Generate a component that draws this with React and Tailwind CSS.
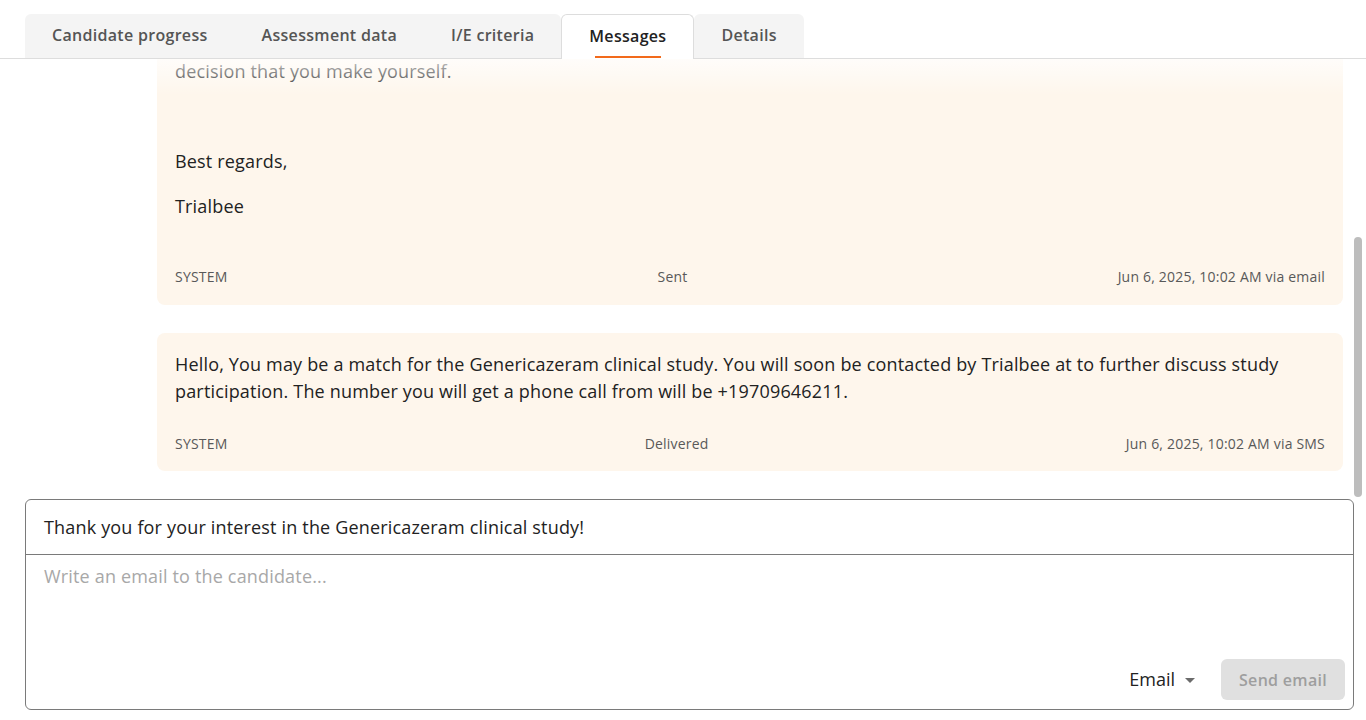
import React from "react";

const TABS = ["Candidate progress", "Assessment data", "I/E criteria", "Messages", "Details"];
const ACTIVE = 3;

function Tab({ label }) {
  return (
    <div className="h-[44px] px-[27px] pb-[2px] flex items-center text-[16px] tracking-[0.3px] font-semibold text-[#555555] whitespace-nowrap">
      {label}
    </div>
  );
}

function Footer({ left, mid, right }) {
  return (
    <div className="mt-[29px] flex justify-between text-[14px] tracking-[0.2px] leading-[19px] text-[#595959]">
      <span>{left}</span>
      <span>{mid}</span>
      <span>{right}</span>
    </div>
  );
}

export default function App() {
  const before = TABS.slice(0, ACTIVE);
  const after = TABS.slice(ACTIVE + 1);

  return (
    <div className="h-screen w-full flex flex-col bg-white font-['Open_Sans',sans-serif] text-[#222222] overflow-hidden">
      {/* Tab bar */}
      <div className="h-[59px] shrink-0 border-b border-[#dddddd] pl-[25px] pt-[14px] flex items-end">
        <div className="flex items-end">
          <div className="flex bg-[#f4f4f4] rounded-t-[6px]">
            {before.map((t) => (
              <Tab key={t} label={t} />
            ))}
          </div>
          <div className="relative h-[45px] -mb-px px-[27px] pb-[2px] flex items-center bg-white border border-b-0 border-[#dddddd] rounded-t-[6px] text-[16px] tracking-[0.3px] font-semibold text-[#222222]">
            <span>{TABS[ACTIVE]}</span>
            <div className="absolute bottom-[1px] left-1/2 -translate-x-1/2 w-[66px] h-[2px] bg-[#f26a1b]" />
          </div>
          <div className="flex bg-[#f4f4f4] rounded-t-[6px]">
            {after.map((t) => (
              <Tab key={t} label={t} />
            ))}
          </div>
        </div>
      </div>

      {/* Messages area */}
      <div className="relative flex-1 min-h-0 flex">
        <div className="flex-1 min-w-0 overflow-hidden flex flex-col justify-end">
          <div className="shrink-0 pt-[28px] pb-[28px] pl-[157px] pr-[11px] flex flex-col gap-[28px]">
            <div className="rounded-[8px] bg-[#fef6ec] pt-[18px] pb-[19px] px-[18px] flex flex-col text-[18px] tracking-[0.17px] leading-[27px] text-[#222222]">
              <p className="mb-[18px]">Hello,</p>
              <p className="mb-[18px]">Thank you for your interest in the Genericazeram clinical study!</p>
              <p className="mb-[18px]">
                A member of the study team at Trialbee will contact you shortly to further discuss
                <br />
                study participation and answer any questions that you may have.
              </p>
              <p className="mb-[18px]">
                Taking part in a clinical study is completely voluntary, and it is a personal
                <br />
                decision that you make yourself.
              </p>
              <p className="mb-[18px]">&nbsp;</p>
              <p className="mb-[18px]">Best regards,</p>
              <p className="mb-[18px]">Trialbee</p>
              <Footer left="SYSTEM" mid="Sent" right="Jun 6, 2025, 10:02 AM via email" />
            </div>

            <div className="rounded-[8px] bg-[#fef6ec] p-[18px] flex flex-col text-[18px] tracking-[0.17px] leading-[27px] text-[#222222]">
              <div>
                Hello, You may be a match for the Genericazeram clinical study. You will soon be contacted by Trialbee at to further discuss study participation. The number you will get a phone call from will be +19709646211.
              </div>
              <Footer left="SYSTEM" mid="Delivered" right="Jun 6, 2025, 10:02 AM via SMS" />
            </div>
          </div>
        </div>
        {/* scrollbar track */}
        <div className="w-[12px] shrink-0 flex flex-col">
          <div className="mt-[178px] h-[260px] w-[8px] rounded-full bg-[#bdbdbd]" />
        </div>
        <div className="pointer-events-none absolute top-0 left-0 right-[12px] h-[36px] bg-linear-to-b from-white/75 to-transparent" />
      </div>

      {/* Composer */}
      <div className="shrink-0 h-[211px] mb-[10px] ml-[25px] mr-[12px] border border-[#7a7a7a] rounded-[6px] flex flex-col">
        <div className="h-[55px] shrink-0 border-b border-[#7a7a7a] px-[18px] flex items-center text-[18px] tracking-[0.17px] text-[#222222]">
          Thank you for your interest in the Genericazeram clinical study!
        </div>
        <textarea
          className="flex-1 min-h-0 resize-none outline-none px-[18px] pt-[8px] text-[18px] tracking-[0.17px] leading-[27px] text-[#222222] placeholder:text-[#a8a8a8] bg-transparent font-['Open_Sans',sans-serif]"
          placeholder="Write an email to the candidate..."
        />
        <div className="shrink-0 flex justify-end items-center pr-[8px] pb-[9px]">
          <div className="flex items-center gap-[10px] text-[18px] text-[#222222] mr-[26px]">
            <span>Email</span>
            <svg width="10" height="5" viewBox="0 0 10 5" className="mt-[2px]">
              <path d="M0 0 L10 0 L5 5 Z" fill="#6b6b6b" />
            </svg>
          </div>
          <button className="h-[41px] px-[18px] rounded-[6px] bg-[#e0e0e0] text-[16px] tracking-[0.3px] font-semibold text-[#9e9e9e] font-['Open_Sans',sans-serif]">
            Send email
          </button>
        </div>
      </div>
    </div>
  );
}
